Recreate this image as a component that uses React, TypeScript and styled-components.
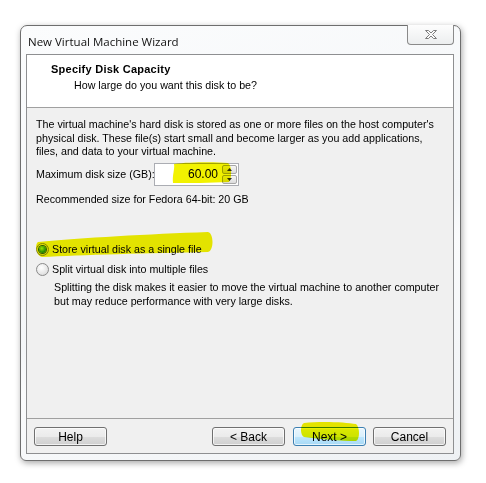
import React from "react";
import styled, { createGlobalStyle, css } from "styled-components";

const Global = createGlobalStyle`
  html, body { margin: 0; padding: 0; background: #ffffff; }
  body { font-family: "Liberation Sans", Arial, sans-serif; font-size: 10.7px; color: #000; }
  * { box-sizing: border-box; }
`;

const Page = styled.div`
  padding: 25px 0 0 20px;
  width: 486px;
  height: 483px;
`;

const Window = styled.div`
  position: relative;
  width: 441px;
  height: 436px;
  border: 1px solid #6e6e6e;
  border-radius: 7px 7px 6px 6px;
  background: linear-gradient(160deg, #fbfcfd 0%, #f4f6f8 55%, #fafbfc 62%, #eef1f4 100%);
  box-shadow: 1px 2px 6px rgba(0, 0, 0, 0.35);
  display: flex;
  flex-direction: column;
`;

const TitleBar = styled.div`
  height: 28px;
  display: flex;
  align-items: center;
  padding-left: 7px;
  padding-right: 6px;
`;

const TitleText = styled.div`
  flex: 1;
  font-family: "Open Sans", "Liberation Sans", sans-serif;
  font-size: 11.5px;
  color: #111;
  padding-top: 2px;
`;

const CloseButton = styled.div`
  align-self: flex-start;
  margin-top: -1px;
  width: 47px;
  height: 20px;
  border: 1px solid #8a8a8a;
  border-top: none;
  border-radius: 0 0 4px 4px;
  background: linear-gradient(#fdfdfd, #eceeef);
  display: flex;
  align-items: center;
  justify-content: center;
`;

const Client = styled.div`
  flex: 1;
  margin: 0 6px 6px 5px;
  border: 1px solid #8e8f91;
  background: #f0f0f0;
  display: flex;
  flex-direction: column;
  white-space: nowrap;
`;

const Header = styled.div`
  height: 53px;
  background: #ffffff;
  border-bottom: 1px solid #a0a0a0;
  padding: 8px 0 0 24px;
  display: flex;
  flex-direction: column;
  gap: 3px;
`;

const HeaderTitle = styled.div`
  font-weight: bold;
  font-size: 11px;
  letter-spacing: 0.25px;
  line-height: 13px;
`;

const HeaderSub = styled.div`
  padding-left: 23px;
  line-height: 13px;
`;

const Body = styled.div`
  flex: 1;
  padding: 10px 9px 0 9px;
  display: flex;
  flex-direction: column;
`;

const Para = styled.p<{ $indent?: number; $top?: number }>`
  margin: ${(p) => p.$top ?? 0}px 0 0 ${(p) => p.$indent ?? 0}px;
  line-height: 13.5px;
`;

const SizeRow = styled.div`
  display: flex;
  align-items: center;
  margin-top: 4px;
`;

const SizeLabel = styled.span`
  width: 118px;
  flex-shrink: 0;
`;

const SpinBox = styled.div`
  width: 85px;
  height: 23px;
  border: 1px solid #abadb3;
  background: #fff;
  display: flex;
  align-items: center;
  padding: 0 1px 0 0;
`;

const SpinValue = styled.span`
  flex: 1;
  text-align: right;
  padding-right: 4px;
  font-size: 12px;
`;

const SpinButtons = styled.div`
  display: flex;
  flex-direction: column;
  gap: 1px;
`;

const SpinBtn = styled.div`
  width: 15px;
  height: 9px;
  border: 1px solid #a7a7a7;
  border-radius: 2px;
  background: linear-gradient(#f6f6f6, #dcdcdc);
  display: flex;
  align-items: center;
  justify-content: center;
`;

const RadioRow = styled.label<{ $top: number }>`
  display: flex;
  align-items: center;
  gap: 3px;
  margin-top: ${(p) => p.$top}px;
  height: 14px;
`;

const RadioDot = styled.span<{ $checked?: boolean }>`
  width: 13px;
  height: 13px;
  border-radius: 50%;
  border: 1px solid #8a8a8a;
  background: radial-gradient(circle at 40% 35%, #ffffff 0%, #e6e6e6 60%, #cfcfcf 100%);
  display: flex;
  align-items: center;
  justify-content: center;
  ${(p) =>
    p.$checked &&
    css`
      &::after {
        content: "";
        width: 7px;
        height: 7px;
        border-radius: 50%;
        background: radial-gradient(circle at 40% 35%, #9ff07a 0%, #2f9a1e 55%, #0f5a0a 100%);
        box-shadow: 0 0 0 1px #2d5d26;
      }
    `}
`;

const Footer = styled.div`
  border-top: 1px solid #a0a0a0;
  padding: 8px 7px 7px 7px;
  display: flex;
  align-items: center;
`;

const Spacer = styled.div`
  flex: 1;
`;

const Button = styled.div<{ $default?: boolean; $gap?: number }>`
  width: 73px;
  height: 19px;
  margin-left: ${(p) => p.$gap ?? 0}px;
  border: 1px solid ${(p) => (p.$default ? "#3c7fb1" : "#707070")};
  border-radius: 3px;
  background: ${(p) =>
    p.$default
      ? "linear-gradient(#eaf6fd 0%, #d9f0fc 50%, #bee6fd 51%, #a7d9f5 100%)"
      : "linear-gradient(#f2f2f2 0%, #ebebeb 50%, #dddddd 51%, #cfcfcf 100%)"};
  box-shadow: inset 0 0 0 1px rgba(255, 255, 255, 0.7);
  display: flex;
  align-items: center;
  justify-content: center;
  font-size: 12px;
`;

const Highlights = styled.svg`
  position: absolute;
  left: -1px;
  top: -1px;
  width: 441px;
  height: 436px;
  pointer-events: none;
  mix-blend-mode: multiply;
`;

export default function App() {
  return (
    <>
      <Global />
      <Page>
        <Window>
          <TitleBar>
            <TitleText>New Virtual Machine Wizard</TitleText>
            <CloseButton>
              <svg width="14" height="11" viewBox="0 0 14 11">
                <path
                  d="M1.5 1.5 L4.5 1.5 L7 4 L9.5 1.5 L12.5 1.5 L8.5 5.5 L12.5 9.5 L9.5 9.5 L7 7 L4.5 9.5 L1.5 9.5 L5.5 5.5 Z"
                  fill="#fbfbfb"
                  stroke="#7d7d7d"
                  strokeWidth="1"
                  strokeLinejoin="round"
                />
              </svg>
            </CloseButton>
          </TitleBar>
          <Client>
            <Header>
              <HeaderTitle>Specify Disk Capacity</HeaderTitle>
              <HeaderSub>How large do you want this disk to be?</HeaderSub>
            </Header>
            <Body>
              <Para>
                The virtual machine's hard disk is stored as one or more files on the host computer's
                <br />
                physical disk. These file(s) start small and become larger as you add applications,
                <br />
                files, and data to your virtual machine.
              </Para>
              <SizeRow>
                <SizeLabel>Maximum disk size (GB):</SizeLabel>
                <SpinBox>
                  <SpinValue>60.00</SpinValue>
                  <SpinButtons>
                    <SpinBtn>
                      <svg width="5" height="3" viewBox="0 0 5 3">
                        <path d="M0 3 L2.5 0 L5 3 Z" fill="#333" />
                      </svg>
                    </SpinBtn>
                    <SpinBtn>
                      <svg width="5" height="3" viewBox="0 0 5 3">
                        <path d="M0 0 L2.5 3 L5 0 Z" fill="#333" />
                      </svg>
                    </SpinBtn>
                  </SpinButtons>
                </SpinBox>
              </SizeRow>
              <Para $top={7}>Recommended size for Fedora 64-bit: 20 GB</Para>
              <RadioRow $top={36}>
                <RadioDot $checked />
                Store virtual disk as a single file
              </RadioRow>
              <RadioRow $top={6}>
                <RadioDot />
                Split virtual disk into multiple files
              </RadioRow>
              <Para $indent={18} $top={5}>
                Splitting the disk makes it easier to move the virtual machine to another computer
                <br />
                but may reduce performance with very large disks.
              </Para>
            </Body>
            <Footer>
              <Button>Help</Button>
              <Spacer />
              <Button>&lt; Back</Button>
              <Button $default $gap={8}>Next &gt;</Button>
              <Button $gap={7}>Cancel</Button>
            </Footer>
          </Client>
          <Highlights viewBox="0 0 441 436">
            <path
              d="M154 139 C170 137 195 137 208 138 C212 140 212 154 209 157 C190 158 170 158 153 158 C152 150 155 144 154 139 Z"
              fill="#f2f200"
            />
            <path
              d="M18 217 C60 213 130 209 188 207 C194 208 194 226 188 227 C130 228 60 230 22 232 C15 230 15 219 18 217 Z"
              fill="#f2f200"
            />
            <path
              d="M284 398 C300 396 325 397 336 399 C340 402 340 414 336 416 C320 416 300 414 284 412 C280 410 280 400 284 398 Z"
              fill="#f2f200"
            />
          </Highlights>
        </Window>
      </Page>
    </>
  );
}
